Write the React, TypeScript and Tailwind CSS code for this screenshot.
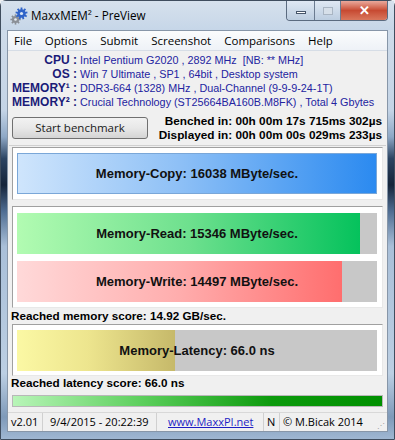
import React from "react";

const tahoma = { fontFamily: '"Liberation Sans", Arial, sans-serif' };
const segoe = { fontFamily: '"Open Sans", "Noto Sans", sans-serif' };

function GearIcon() {
  return (
    <svg width="18" height="18" viewBox="0 0 18 18">
      <g fill="#8a8f96">
        <circle cx="5.5" cy="12.5" r="3.6" />
        {[0, 45, 90, 135, 180, 225, 270, 315].map((a) => (
          <rect key={a} x="4.7" y="7.4" width="1.6" height="2.2" transform={`rotate(${a} 5.5 12.5)`} />
        ))}
        <circle cx="5.5" cy="12.5" r="1.3" fill="#e8eef5" />
      </g>
      <g fill="#2f63c8">
        <circle cx="11.5" cy="6.5" r="4.3" />
        {[0, 40, 80, 120, 160, 200, 240, 280, 320].map((a) => (
          <rect key={a} x="10.6" y="0.5" width="1.8" height="2.4" transform={`rotate(${a} 11.5 6.5)`} />
        ))}
        <circle cx="11.5" cy="6.5" r="1.6" fill="#dbe6f3" />
      </g>
    </svg>
  );
}

function Bar({
  label,
  pct,
  gradient,
  h = "h-[41px]",
}: {
  label: string;
  pct: number;
  gradient: string;
  h?: string;
}) {
  return (
    <div className={`relative ${h} bg-[#c8c8c8]`}>
      <div className="absolute inset-y-0 left-0" style={{ width: `${pct}%`, background: gradient }} />
      <div
        className="absolute inset-0 flex items-center justify-center text-[13px] font-bold text-[#111]"
        style={tahoma}
      >
        {label}
      </div>
    </div>
  );
}

const panel =
  "mx-[4px] bg-white border-t border-l border-[#a0a0a0] border-r border-b border-r-[#e8e8e8] border-b-[#e8e8e8] pl-[4px] pr-[5px]";

export default function App() {
  return (
    <div className="w-[395px] h-[440px] overflow-hidden bg-[#eef0f3]">
      <div className="w-[395px] h-[440px] flex flex-col rounded-t-[6px] border border-[#3f4d5e] bg-[linear-gradient(to_bottom,#d2deeb_0%,#c4d4e6_25%,#8ea8c6_31%,#2c4462_36%,#15243a_42%,#4f6d92_48%,#a9bfd8_56%,#bccfe3_85%,#7f9ab9_95%,#9fb7d2_100%)]">
        {/* title bar */}
        <div className="h-[29px] flex items-start relative bg-gradient-to-b from-[#d6e1ed] to-[#c6d6e8]">
          <div className="flex items-center gap-[3px] pl-[9px] pt-[6px]">
            <GearIcon />
            <span className="text-[11.7px] text-black" style={segoe}>
              MaxxMEM² - PreView
            </span>
          </div>
          <div className="ml-auto mr-[6px] flex h-[20px] rounded-b-[4px] border border-t-0 border-[#5b6b80] overflow-hidden">
            <div className="w-[28px] flex items-center justify-center bg-gradient-to-b from-[#dfe8f3] to-[#bccde0] border-r border-[#6b7b90]">
              <div className="w-[10px] h-[3px] bg-white border border-[#46556a] mt-[3px]" />
            </div>
            <div className="w-[26px] flex items-center justify-center bg-gradient-to-b from-[#dfe8f3] to-[#bccde0] border-r border-[#6b7b90]">
              <div className="w-[10px] h-[8px] border border-[#a9b5c3] bg-[#d6dfe9]" />
            </div>
            <div className="w-[46px] flex items-center justify-center bg-gradient-to-b from-[#e9a99c] via-[#c74a32] to-[#d9765c]">
              <span className="text-white font-bold text-[13px] leading-none" style={tahoma}>
                ✕
              </span>
            </div>
          </div>
        </div>
        {/* body */}
        <div className="flex-1 flex px-[6px] pb-[7px] min-w-0">
          <div className="flex-1 min-w-0 flex flex-col bg-[#f0f0f0] border border-[#8796a8] overflow-hidden">
            {/* menu */}
            <div
              className="h-[20px] flex items-center bg-gradient-to-b from-[#fbfcfd] to-[#eef2f7] border-b border-[#d6dde6] text-[11.5px] text-black"
              style={segoe}
            >
              <span className="pl-[6px] pr-[6px]">File</span>
              <span className="px-[6.5px]">Options</span>
              <span className="px-[6.5px]">Submit</span>
              <span className="px-[6.5px]">Screenshot</span>
              <span className="px-[6.5px]">Comparisons</span>
              <span className="px-[6.5px]">Help</span>
            </div>
            {/* info */}
            <div className="pt-[2px] grid grid-cols-[69px_minmax(0,1fr)] leading-[14px]" style={tahoma}>
              {[
                ["CPU :", "Intel Pentium G2020 , 2892 MHz  [NB: ** MHz]"],
                ["OS :", "Win 7 Ultimate , SP1 , 64bit , Desktop system"],
                ["MEMORY¹ :", "DDR3-664 (1328) MHz , Dual-Channel (9-9-9-24-1T)"],
                ["MEMORY² :", "Crucial Technology (ST25664BA160B.M8FK) , Total 4 Gbytes"],
              ].map(([k, v]) => (
                <React.Fragment key={k}>
                  <div className="text-right font-bold text-[12px] text-[#1b1b78] whitespace-nowrap">{k}</div>
                  <div className="pl-[3px] text-[10.8px] text-[#2323a0] whitespace-pre overflow-hidden">{v}</div>
                </React.Fragment>
              ))}
            </div>
            {/* button row */}
            <div className="mt-[5px] flex items-center pl-[4px] pr-[5px]">
              <div
                className="w-[136px] h-[22px] shrink-0 rounded-[3px] border border-[#707070] bg-gradient-to-b from-[#f2f2f2] via-[#e8e8e8] to-[#d4d4d4] flex items-center justify-center text-[11.5px] text-[#1a1a1a]"
                style={segoe}
              >
                Start benchmark
              </div>
              <div
                className="ml-auto text-right font-bold text-[11.8px] leading-[14px] text-black whitespace-nowrap"
                style={tahoma}
              >
                <div>Benched in: 00h 00m 17s 715ms 302µs</div>
                <div>Displayed in: 00h 00m 00s 029ms 233µs</div>
              </div>
            </div>
            <div className="mt-[3px] mx-[1px] border-t border-[#d0d0d0]" />
            {/* copy panel */}
            <div className={`${panel} mt-[1px] pt-[5px] pb-[5px]`}>
              <div className="border border-[#7aa7d8]">
                <Bar
                  label="Memory-Copy: 16038 MByte/sec."
                  pct={100}
                  h="h-[39px]"
                  gradient="linear-gradient(to right, #cfe5fc, #8ec0f6 45%, #2b8af0)"
                />
              </div>
            </div>
            {/* read write panel */}
            <div className={`${panel} mt-[6px] pt-[6px] pb-[5px] flex flex-col gap-[7px]`}>
              <Bar
                label="Memory-Read: 15346 MByte/sec."
                pct={95.4}
                gradient="linear-gradient(to right, #b2fbb2, #6ee08e 50%, #05c25c)"
              />
              <Bar
                label="Memory-Write: 14497 MByte/sec."
                pct={90.2}
                gradient="linear-gradient(to right, #ffd9d9, #ffadad 50%, #ff6e6e)"
              />
            </div>
            <div className="px-[3px] pt-[1px] text-[11.7px] leading-[14px] font-bold text-black whitespace-nowrap" style={tahoma}>
              Reached memory score: 14.92 GB/sec.
            </div>
            {/* latency */}
            <div className={`${panel} mt-[1px] pt-[5px] pb-[4px]`}>
              <Bar
                label="Memory-Latency: 66.0 ns"
                pct={44}
                gradient="linear-gradient(to right, #fbf8a4, #ede58e 45%, #c6b96a)"
              />
            </div>
            <div className="px-[3px] text-[11.7px] leading-[14px] font-bold text-black whitespace-nowrap" style={tahoma}>
              Reached latency score: 66.0 ns
            </div>
            <div className="mx-[4px] mt-[5px] h-[12px] border border-[#b8b8b8] bg-[linear-gradient(to_right,#b8f5b8,#5ccf5c_35%,#0c9a0c_70%,#009000)]" />
            {/* status bar */}
            <div
              className="mt-auto h-[19px] flex items-center text-[11px] text-black border-t border-[#d8d8d8] bg-[#f0f0f0] whitespace-nowrap"
              style={segoe}
            >
              <div className="w-[35px] shrink-0 pl-[3px] border-r border-[#d0d0d0] h-full flex items-center">v2.01</div>
              <div className="w-[114px] shrink-0 pl-[7px] border-r border-[#d0d0d0] h-full flex items-center">9/4/2015 - 20:22:39</div>
              <div className="w-[107px] shrink-0 pl-[11px] border-r border-[#d0d0d0] h-full flex items-center text-[#1d1dc4] underline">
                www.MaxxPI.net
              </div>
              <div className="w-[16px] shrink-0 pl-[3px] border-r border-[#d0d0d0] h-full flex items-center">N</div>
              <div className="pl-[3px] h-full flex items-center">© M.Bicak 2014</div>
              <div className="ml-auto mr-[2px] self-end mb-[2px] text-[8px] leading-none text-[#a0a0a0]">⋰</div>
            </div>
          </div>
        </div>
      </div>
    </div>
  );
}
